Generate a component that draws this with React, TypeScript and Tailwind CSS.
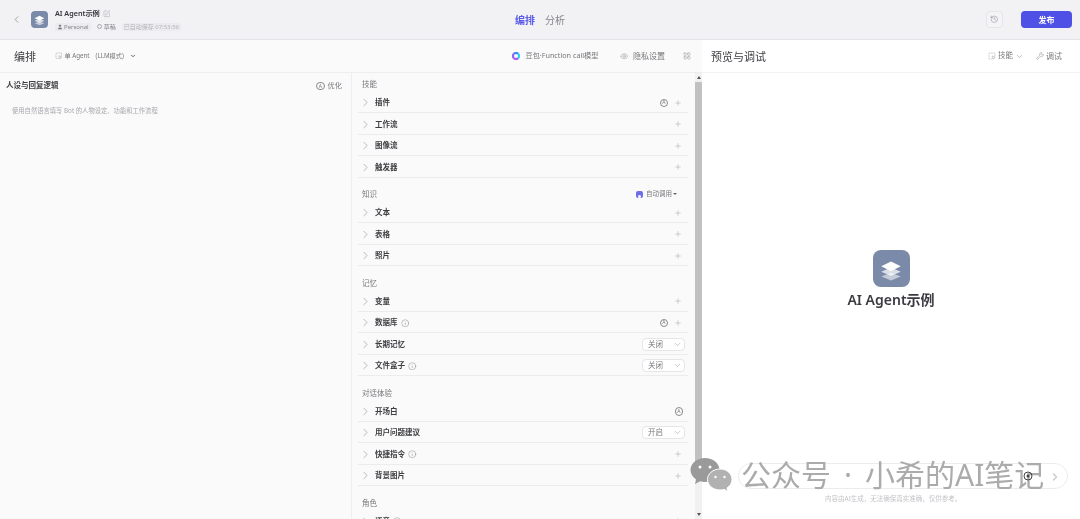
import React from "react";
import { ChevronLeft, ChevronRight, ChevronDown, SquarePen, User, Plus, Info, Eye, LayoutGrid, History, Wrench, SquareDashedMousePointer } from "lucide-react";

const font = { fontFamily: '"Noto Sans", "Noto Sans CJK SC", sans-serif' };

function Auto() {
  return (
    <span className="flex h-[8.5px] w-[8.5px] items-center justify-center rounded-full border border-[#8a8a90] text-[5px] leading-none text-[#77777d]">A</span>
  );
}

function Sel({ v }: { v: string }) {
  return (
    <div className="mr-[-3px] flex h-[13px] w-[43px] items-center justify-between rounded-[4px] border border-[#e6e6e9] bg-white pl-[5px] pr-[2px] text-[7.5px] leading-none text-[#77777d]">
      {v}
      <ChevronDown size={9} strokeWidth={1.2} color="#888" />
    </div>
  );
}

function Row({ t, info, auto, plus = true, sel, autoOnly }: { t: string; info?: boolean; auto?: boolean; plus?: boolean; sel?: string; autoOnly?: boolean }) {
  return (
    <div className="flex h-[21.5px] items-center border-b border-[#ececef] pl-[1px] pr-[6px] pt-[2px]">
      <ChevronRight size={13} strokeWidth={1.1} color="#8d8d92" className="mr-[3px]" />
      <span className="text-[7.5px] font-bold leading-none text-[#3d3d42]">{t}</span>
      {info && <Info size={8.5} strokeWidth={1.2} color="#77777d" className="ml-[3px]" />}
      <div className="flex-1" />
      {auto && <span className="mr-[6px]"><Auto /></span>}
      {autoOnly && <span className="mr-[-1px]"><Auto /></span>}
      {sel && <Sel v={sel} />}
      {plus && !sel && !autoOnly && <Plus size={8} strokeWidth={1.2} color="#8d8d92" />}
    </div>
  );
}

function Section({ title, children, first, right, head = "" }: { title: string; children?: React.ReactNode; first?: boolean; right?: React.ReactNode; head?: string }) {
  return (
    <div className={first ? "pt-[4px]" : "pt-[9.5px]"}>
      <div className={"flex h-[14.5px] items-center justify-between pl-[4px] pr-[11px] text-[7.5px] leading-none text-[#77777d] " + head}>
        <span>{title}</span>
        {right}
      </div>
      {children}
    </div>
  );
}

function Stack({ size }: { size: number }) {
  return (
    <svg width={size} height={size} viewBox="0 0 24 24" fill="none">
      <path d="M12 15.5 21 19 12 22.5 3 19Z" fill="#fff" opacity=".55" />
      <path d="M12 10.5 21 14.5 12 18.5 3 14.5Z" fill="#fff" opacity=".72" />
      <path d="M12 5 21 9.5 12 14 3 9.5Z" fill="#fff" />
    </svg>
  );
}

export default function App() {
  return (
    <div style={font} className="relative flex h-[519px] w-[1080px] flex-col overflow-hidden bg-white blur-[0.35px]">
      <header className="flex h-[40px] shrink-0 items-center border-b border-[#e4e4e8] bg-[#f2f2f5] pl-[11px] pr-[8px]">
        <ChevronLeft size={11} strokeWidth={1.4} color="#77777d" />
        <div className="ml-[9px] flex h-[17px] w-[17px] items-center justify-center rounded-[4px] bg-[#7b8aa8]">
          <Stack size={13} />
        </div>
        <div className="ml-[7px] flex flex-col gap-[5px] pt-[2px]">
          <div className="flex items-center gap-[3px] text-[7.2px] font-semibold leading-none text-[#36363b]">
            AI Agent示例
            <SquarePen size={7.5} strokeWidth={1.1} color="#85858a" />
          </div>
          <div className="flex items-center text-[6px] leading-none text-[#9a9aa0]">
            <span className="flex items-center gap-[1px] rounded-[2px] bg-[#ececf0] px-[2px] py-[1px] text-[#85858a]"><User size={6} fill="#6f6f75" strokeWidth={1} />Personal</span>
            <span className="ml-[6px] flex items-center gap-[2px] text-[#85858a]"><span className="h-[5px] w-[5px] rounded-full border border-[#a5a5ab]" />草稿</span>
            <span className="ml-[6px] rounded-[2px] bg-[#ececf0] px-[2px] py-[1px] text-[#b4b4ba]">已自动保存 07:53:56</span>
          </div>
        </div>
        <div className="flex flex-1 items-center justify-end gap-[10px] pr-[421px] text-[10px] leading-none">
          <span className="font-semibold text-[#5a5ce8]">编排</span>
          <span className="text-[#85858a]">分析</span>
        </div>
        <div className="flex h-[17px] w-[17px] items-center justify-center rounded-[4px] border border-[#e6e6ea] bg-[#f4f4f6]">
          <History size={8.5} strokeWidth={1.2} color="#6f6f75" />
        </div>
        <div className="ml-[18px] flex h-[17px] w-[51px] items-center justify-center rounded-[4px] bg-[#4f50e6] text-[8px] font-semibold leading-none text-white">发布</div>
      </header>

      <div className="flex min-h-0 flex-1">
        <div className="flex w-[702px] shrink-0 flex-col bg-[#fafafa]">
          <div className="flex h-[33px] shrink-0 items-center border-b border-[#eeeef0] pl-[14px] pr-[11px]">
            <span className="text-[11px] leading-none text-[#3d3d42]">编排</span>
            <div className="ml-[19px] flex items-center text-[6.2px] leading-none text-[#77777d]">
              <SquareDashedMousePointer size={7.5} strokeWidth={1.1} className="mr-[2px]" />
              单 Agent
              <span className="ml-[6px]">(LLM模式)</span>
              <ChevronDown size={6} strokeWidth={3} color="#333" className="ml-[6px]" />
            </div>
            <div className="flex-1" />
            <div className="flex items-center text-[7.2px] leading-none text-[#77777d]">
              <span className="mr-[5px] h-[8px] w-[8px] rounded-full border-2 border-l-[#8b5cf6] border-t-[#3b82f6] border-r-[#22d3ee] border-b-[#a855f7]" />
              豆包·Function call模型
            </div>
            <div className="ml-[21px] flex items-center text-[8px] leading-none text-[#77777d]">
              <Eye size={8.5} strokeWidth={1.2} className="mr-[5px]" />
              隐私设置
            </div>
            <LayoutGrid size={8} strokeWidth={1.2} color="#85858a" className="ml-[18px]" />
          </div>
          <div className="flex min-h-0 flex-1">
            <div className="w-[352px] shrink-0 border-r border-[#eeeef0]">
              <div className="flex h-[26px] items-center justify-between pl-[6px] pr-[9px]">
                <span className="text-[7.5px] font-semibold leading-none text-[#3d3d42]">人设与回复逻辑</span>
                <span className="flex items-center gap-[3px] text-[7.2px] leading-none text-[#77777d]"><Auto />优化</span>
              </div>
              <p className="pl-[12px] pt-[9px] text-[6.3px] leading-none text-[#a8a8ae]">使用自然语言填写 Bot 的人物设定、功能和工作流程</p>
            </div>
            <div className="min-w-0 flex-1 overflow-hidden pl-[6px] pr-[7px]">
              <Section title="技能" first>
                <Row t="插件" auto />
                <Row t="工作流" />
                <Row t="图像流" />
                <Row t="触发器" />
              </Section>
              <Section title="知识" right={
                <span className="flex items-center gap-[3px] text-[6.5px] text-[#77777d]">
                  <span className="flex h-[6.5px] w-[7px] items-end justify-center rounded-[2px] bg-[#6d6fe8]"><span className="h-[3px] w-[3px] rounded-full bg-white" /></span>
                  <span>自动调用</span>
                  <span className="ml-[-2px] border-x-[2px] border-t-[2px] border-x-transparent border-t-[#666]" />
                </span>
              }>
                <Row t="文本" />
                <Row t="表格" />
                <Row t="照片" />
              </Section>
              <Section title="记忆" head="pt-[1px]">
                <Row t="变量" />
                <Row t="数据库" info auto />
                <Row t="长期记忆" sel="关闭" />
                <Row t="文件盒子" info sel="关闭" />
              </Section>
              <Section title="对话体验" head="pt-[2px]">
                <Row t="开场白" autoOnly />
                <Row t="用户问题建议" sel="开启" />
                <Row t="快捷指令" info />
                <Row t="背景图片" />
              </Section>
              <Section title="角色" head="pt-[2px]">
                <Row t="语音" info />
              </Section>
            </div>
            <div className="flex w-[7px] shrink-0 flex-col items-center bg-[#f1f1f1]">
              <span className="mt-[3px] border-x-[2px] border-b-[3px] border-x-transparent border-b-[#555]" />
              <div className="mt-[3px] h-[390px] w-full bg-[#c1c1c1]" />
              <div className="flex-1" />
              <span className="mb-[3px] border-x-[2px] border-t-[3px] border-x-transparent border-t-[#555]" />
            </div>
          </div>
        </div>

        <div className="flex min-w-0 flex-1 flex-col bg-white">
          <div className="flex h-[33px] shrink-0 items-center border-b border-[#f3f3f5] pl-[9px] pr-[18px]">
            <span className="text-[11px] leading-none text-[#3d3d42]">预览与调试</span>
            <div className="flex-1" />
            <div className="flex items-center gap-[2px] text-[7.5px] leading-none text-[#77777d]">
              <SquareDashedMousePointer size={8} strokeWidth={1.1} />技能
              <ChevronDown size={9} strokeWidth={1.2} />
            </div>
            <div className="ml-[12px] flex items-center gap-[2px] text-[8px] leading-none text-[#77777d]">
              <Wrench size={8} strokeWidth={1.2} />调试
            </div>
          </div>
          <div className="flex flex-col items-center pt-[177px]">
            <div className="flex h-[37px] w-[37px] items-center justify-center rounded-[8px] bg-[#7b8aa8]">
              <Stack size={26} />
            </div>
            <div className="mt-[4px] text-[14px] font-semibold leading-[18px] text-[#3a3a40]">AI Agent示例</div>
          </div>
        </div>
      </div>

      <div className="absolute left-[738px] top-[463px] h-[26px] w-[330px] rounded-full border border-[#ececef] bg-white" />
      <p className="absolute left-[825px] top-[495px] text-[6.5px] leading-[8px] text-[#c4c4c8]">内容由AI生成，无法确保真实准确，仅供参考。</p>
      <svg className="absolute left-[690px] top-[457px]" width="44" height="36" viewBox="0 0 44 36">
        <path d="M15 1C7 1 .5 6.500.5 13c0 3.800 2.200 7.200 5.600 9.400L5 27l5-2.700c1.600.4 3.200.7 5 .7 8 0 14.500-5.500 14.500-12S23 1 15 1Z" fill="#9a9a9a" />
        <path d="M30 12c-7 0-12.500 4.700-12.500 10.500S23 33 30 33c1.400 0 2.700-.2 4-.6l4 2.100-1-3.500c3-2 5-5 5-8.500C42 16.700 36.900 12 30 12Z" fill="#b1b1b1" stroke="#fff" strokeWidth="1" />
        <circle cx="10" cy="10" r="1.500" fill="#fff" />
        <circle cx="20" cy="10" r="1.500" fill="#fff" />
        <circle cx="25.500" cy="20" r="1.200" fill="#fff" />
        <circle cx="34.500" cy="20" r="1.200" fill="#fff" />
      </svg>
      <div className="absolute left-[741px] top-[455px] flex items-center whitespace-nowrap text-[30px] leading-[40px] text-[#ababab]">
        <span>公众号</span>
        <span className="w-[34px] text-center">·</span>
        <span>小希的AI笔记</span>
      </div>
      <svg className="absolute left-[1023px] top-[471px]" width="10" height="10" viewBox="0 0 10 10" fill="none">
        <circle cx="5" cy="5" r="4" stroke="#444" strokeWidth="1" />
        <circle cx="5" cy="5" r="1.500" fill="#444" />
      </svg>
      <ChevronRight className="absolute left-[1049px] top-[471px]" size={12} strokeWidth={2.6} color="#c8c8cc" />
    </div>
  );
}
